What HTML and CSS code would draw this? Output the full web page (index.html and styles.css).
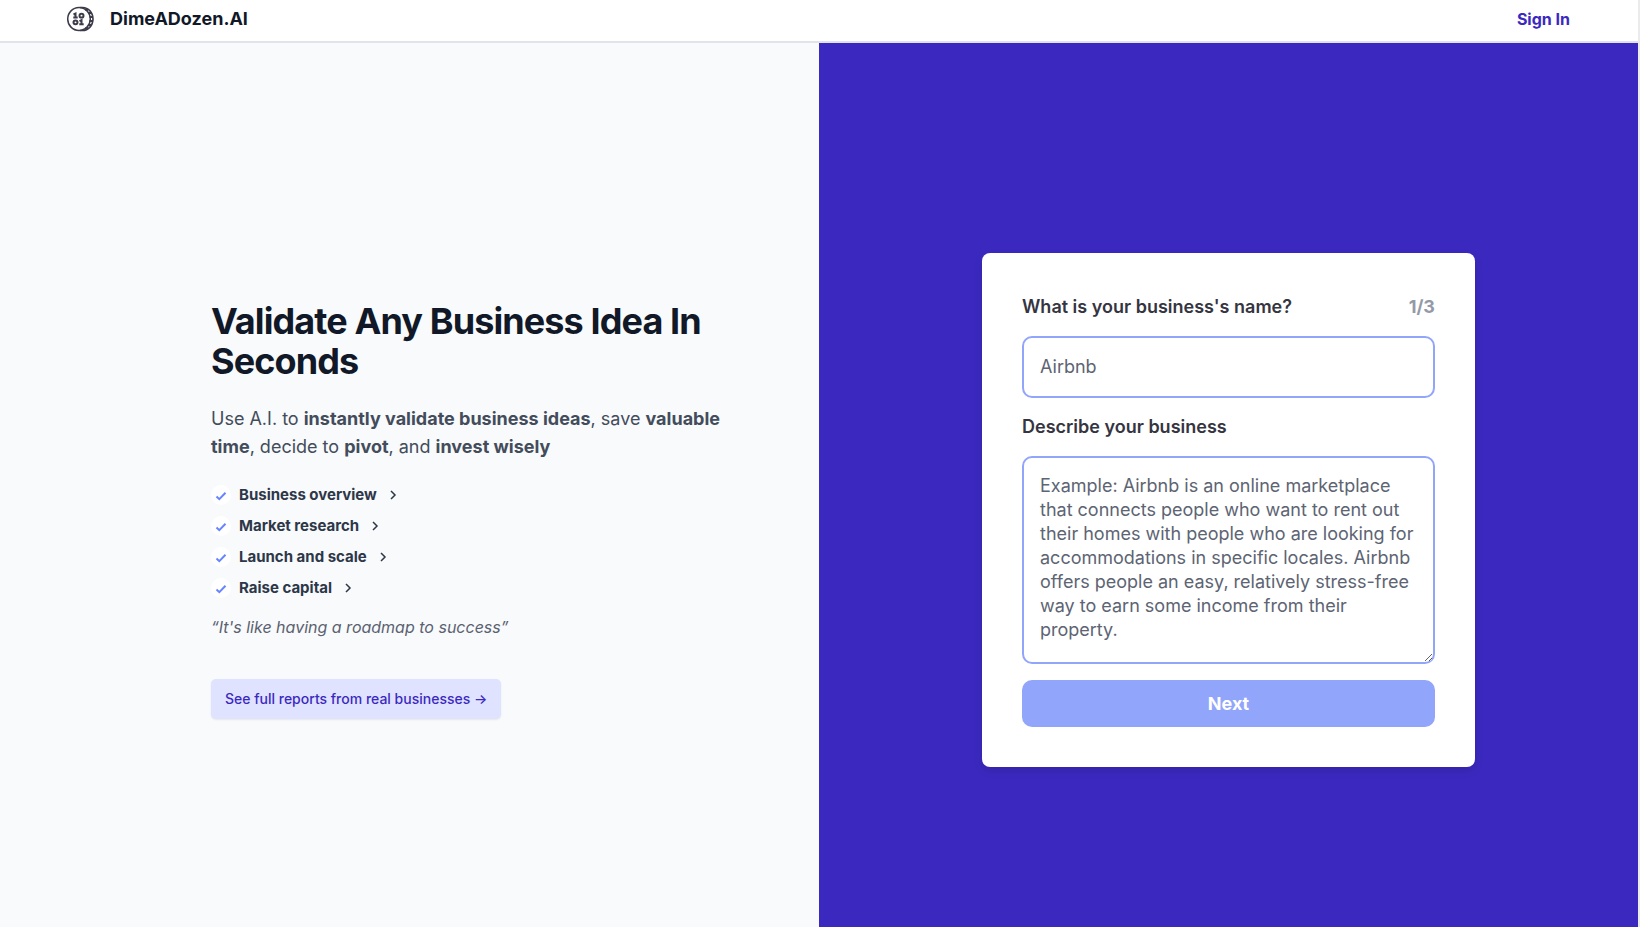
FILE: index.html
```html
<!DOCTYPE html>
<html lang="en">
<head>
<meta charset="utf-8">
<meta name="viewport" content="width=device-width, initial-scale=1">
<title>DimeADozen.AI</title>
<link rel="stylesheet" href="styles.css">
</head>
<body>
<header class="site-header">
  <a class="brand" href="#">
    <svg class="brand-logo" viewBox="0 0 28 26" aria-hidden="true">
      <g fill="none" stroke="#3b3b4a">
        <ellipse cx="13" cy="13" rx="11.300" ry="11.500" stroke-width="1.500"/>
        <path d="M14 1.500h2.500c6 0 10.500 5.200 10.500 11.500s-4.500 11.500-10.500 11.500H14" stroke-width="1.600"/>
        <path d="M19 3.500l3 .5M22 7l3 0M23.500 11h3M23.500 15h3M22 19h3M19 22.500l3-.5" stroke-width="2"/>
        <g stroke-width="2">
          <path d="M7.500 8.500l2-1v4M7.300 11.500h4.400"/>
          <ellipse cx="15.500" cy="9.700" rx="2" ry="1.900"/>
          <ellipse cx="9.500" cy="16.300" rx="2" ry="1.900"/>
          <path d="M13.500 15.200l2-1v4M13.300 18.200h4.400"/>
        </g>
      </g>
    </svg>
    <span>DimeADozen.AI</span>
  </a>
  <a class="sign-in" href="#">Sign In</a>
</header>
<main class="split">
  <section class="intro">
    <div class="intro-body">
      <h1 class="headline">Validate Any Business Idea In Seconds</h1>
      <p class="lead">Use A.I. to <strong>instantly validate business ideas</strong>, save <strong>valuable time</strong>, decide to <strong>pivot</strong>, and <strong>invest wisely</strong></p>
      <ul class="features">
        <li><a class="feature" href="#"><svg class="check" viewBox="0 0 20 20" aria-hidden="true"><circle cx="10" cy="10" r="10" fill="#fff"/><path d="M5.500 11.500l2.800 2.700 6.200-6.400" fill="none" stroke="#6785ff" stroke-width="2"/></svg><span>Business overview</span><svg class="chevron" viewBox="0 0 12 12" aria-hidden="true"><path d="M4 2l4 4-4 4" fill="none" stroke="#2d3748" stroke-width="1.500"/></svg></a></li>
        <li><a class="feature" href="#"><svg class="check" viewBox="0 0 20 20" aria-hidden="true"><circle cx="10" cy="10" r="10" fill="#fff"/><path d="M5.500 11.500l2.800 2.700 6.200-6.400" fill="none" stroke="#6785ff" stroke-width="2"/></svg><span>Market research</span><svg class="chevron" viewBox="0 0 12 12" aria-hidden="true"><path d="M4 2l4 4-4 4" fill="none" stroke="#2d3748" stroke-width="1.500"/></svg></a></li>
        <li><a class="feature" href="#"><svg class="check" viewBox="0 0 20 20" aria-hidden="true"><circle cx="10" cy="10" r="10" fill="#fff"/><path d="M5.500 11.500l2.800 2.700 6.200-6.400" fill="none" stroke="#6785ff" stroke-width="2"/></svg><span>Launch and scale</span><svg class="chevron" viewBox="0 0 12 12" aria-hidden="true"><path d="M4 2l4 4-4 4" fill="none" stroke="#2d3748" stroke-width="1.500"/></svg></a></li>
        <li><a class="feature" href="#"><svg class="check" viewBox="0 0 20 20" aria-hidden="true"><circle cx="10" cy="10" r="10" fill="#fff"/><path d="M5.500 11.500l2.800 2.700 6.200-6.400" fill="none" stroke="#6785ff" stroke-width="2"/></svg><span>Raise capital</span><svg class="chevron" viewBox="0 0 12 12" aria-hidden="true"><path d="M4 2l4 4-4 4" fill="none" stroke="#2d3748" stroke-width="1.500"/></svg></a></li>
      </ul>
      <p class="quote">“It's like having a roadmap to success”</p>
      <a class="reports" href="#">See full reports from real businesses →</a>
    </div>
  </section>
  <section class="signup">
    <form class="card">
      <div class="label-row">
        <label class="label" for="name">What is your business's name?</label>
        <span class="step">1/3</span>
      </div>
      <input class="field" id="name" type="text" placeholder="Airbnb">
      <label class="label" for="about">Describe your business</label>
      <textarea class="field field-area" id="about" rows="7" placeholder="Example: Airbnb is an online marketplace that connects people who want to rent out their homes with people who are looking for accommodations in specific locales. Airbnb offers people an easy, relatively stress-free way to earn some income from their property."></textarea>
      <button class="next" type="button">Next</button>
    </form>
  </section>
</main>
</body>
</html>
```
FILE: styles.css
```css
*, *::before, *::after { box-sizing: border-box; }

body {
  margin: 0;
  min-height: 100vh;
  display: flex;
  flex-direction: column;
  border-right: 2px solid #ebebeb;
  background: #f8fafc;
  color: #111827;
  font-family: Inter, "Liberation Sans", sans-serif;
  font-size: 16px;
  line-height: 24px;
}

h1, p, ul { margin: 0; padding: 0; }
ul { list-style: none; }
a { color: inherit; text-decoration: none; }

.site-header {
  display: flex;
  align-items: center;
  justify-content: space-between;
  padding: 5px 68px 8px 66px;
  border-bottom: 2px solid #e2e3ea;
  background: #fff;
}

.brand {
  display: flex;
  align-items: center;
  gap: 16px;
  font-size: 18px;
  line-height: 28px;
  font-weight: 700;
}
.brand-logo { width: 28px; height: 26px; }

.sign-in { color: #3b29bf; font-weight: 700; }

.split {
  flex: 1;
  display: grid;
  grid-template-columns: 1fr 1fr;
}

.intro, .signup {
  display: flex;
  align-items: center;
  padding-top: 50px;
}
.intro { justify-content: flex-end; padding-right: 96px; }
.intro-body { width: 100%; max-width: 512px; }

.headline {
  font-size: 36px;
  line-height: 40px;
  font-weight: 700;
  letter-spacing: -0.025em;
}

.lead {
  margin-top: 24px;
  font-size: 18px;
  line-height: 28px;
  color: #434c5b;
}
.lead strong { font-weight: 700; }

.features {
  display: grid;
  gap: 7px;
  margin-top: 22px;
}
.feature {
  display: flex;
  align-items: center;
  color: #2d3748;
  font-size: 15px;
  font-weight: 700;
}
.check { width: 20px; height: 20px; margin-right: 8px; }
.chevron { width: 12px; height: 12px; margin-left: 10px; }

.quote {
  margin-top: 15px;
  color: #5b6170;
  font-style: italic;
  font-weight: 400;
}

.reports {
  display: inline-block;
  margin-top: 40px;
  padding: 10px 14px;
  border-radius: 5px;
  background: #dfe3ff;
  box-shadow: 0 1px 2px rgba(0, 0, 0, 0.08);
  color: #3b29bf;
  font-size: 14px;
  line-height: 20px;
  font-weight: 500;
}

.signup { justify-content: center; background: #3b29bf; }

.card {
  display: flex;
  flex-direction: column;
  width: 90%;
  max-width: 493px;
  padding: 40px;
  border-radius: 8px;
  background: #fff;
  box-shadow: 0 4px 8px rgba(0, 0, 0, 0.12);
}

.label-row {
  display: flex;
  justify-content: space-between;
}
.label, .step {
  font-size: 18px;
  line-height: 28px;
  font-weight: 600;
}
.label { color: #353541; }
.step { color: #9499a8; font-weight: 700; }

.field {
  width: 100%;
  margin: 15px 0;
  padding: 17px 16px;
  border: 2px solid #91a5fb;
  border-radius: 10px;
  background: #fff;
  color: #353541;
  font: 400 18px/24px Inter, "Liberation Sans", sans-serif;
}
.field::placeholder { color: #5d6473; opacity: 1; }
.field-area {
  display: block;
  margin-bottom: 16px;
  padding: 16px 16px 20px;
  resize: vertical;
}

.next {
  padding: 10px 16px;
  border: 0;
  border-radius: 10px;
  background: #91a5fb;
  color: #fff;
  font: 700 18px/27px Inter, "Liberation Sans", sans-serif;
}
```
